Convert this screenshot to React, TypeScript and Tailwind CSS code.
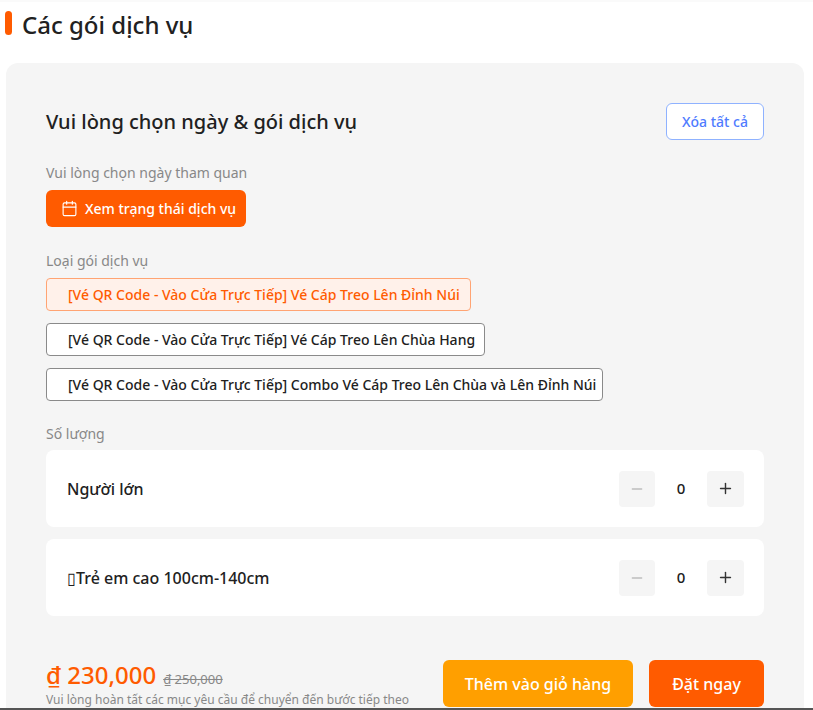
import { Calendar, Minus, Plus } from "lucide-react";

const font = { fontFamily: '"Noto Sans", "Open Sans", sans-serif' };

function Counter({ label }: { label: string }) {
  return (
    <div className="flex h-[77px] items-center justify-between rounded-lg bg-white pl-[21px] pr-5">
      <span className="text-[16px] font-medium text-[#212121]">{label}</span>
      <div className="flex items-center">
        <button className="flex h-9 w-9 items-center justify-center rounded bg-[#f5f5f5] text-[#bdbdbd]">
          <Minus size={16} />
        </button>
        <span className="w-[52px] text-center text-[15px] font-medium text-[#212121]">0</span>
        <button className="flex h-9 w-[37px] items-center justify-center rounded bg-[#f5f5f5] text-[#333]">
          <Plus size={17} />
        </button>
      </div>
    </div>
  );
}

export default function App() {
  const base = "flex h-[33px] items-center rounded border pl-[21px] text-[14px] font-medium";
  return (
    <div style={font} className="relative h-[710px] w-[813px] overflow-hidden bg-white">
      <div className="h-[2px] bg-[#fafafa]" />
      <div className="flex h-[61px] items-start pl-[5px] pt-[9px]">
        <div className="h-6 w-[7px] rounded bg-[#ff5b00]" />
        <h1 className="ml-[10px] text-[24px] leading-[30px] font-medium text-[#212121] -mt-[1px]">Các gói dịch vụ</h1>
      </div>
      <div className="ml-[6px] h-[660px] w-[798px] rounded-xl bg-[#f5f5f5] px-10 pt-10">
        <div className="flex h-[37px] items-center justify-between">
          <h2 className="text-[20px] font-medium text-[#212121]">Vui lòng chọn ngày &amp; gói dịch vụ</h2>
          <button className="h-[37px] w-[98px] rounded-md border border-[#8fb2ff] bg-white text-[14px] font-medium text-[#4f7cff]">
            Xóa tất cả
          </button>
        </div>
        <p className="mt-[23px] text-[14px] leading-5 text-[#888]">Vui lòng chọn ngày tham quan</p>
        <button className="mt-[7px] flex h-[37px] w-[200px] items-center gap-[7px] rounded-md bg-[#ff5b00] pl-[15px] text-[14px] font-medium text-white">
          <Calendar size={17} strokeWidth={1.6} />
          Xem trạng thái dịch vụ
        </button>
        <p className="mt-6 text-[14px] leading-5 text-[#888]">Loại gói dịch vụ</p>
        <div className="mt-[7px] flex flex-col items-start gap-[12px]">
          <div className={`${base} w-[425px] border-[#ffa473] bg-[#fff1ea] text-[#ff5b00]`}>
            [Vé QR Code - Vào Cửa Trực Tiếp] Vé Cáp Treo Lên Đỉnh Núi
          </div>
          <div className={`${base} w-[439px] border-[#8a8a8a] bg-white text-[#212121]`}>
            [Vé QR Code - Vào Cửa Trực Tiếp] Vé Cáp Treo Lên Chùa Hang
          </div>
          <div className={`${base} w-[557px] border-[#8a8a8a] bg-white text-[#212121]`}>
            [Vé QR Code - Vào Cửa Trực Tiếp] Combo Vé Cáp Treo Lên Chùa và Lên Đỉnh Núi
          </div>
        </div>
        <p className="mt-[23px] text-[14px] leading-5 text-[#888]">Số lượng</p>
        <div className="mt-[6px] flex flex-col gap-3">
          <Counter label="Người lớn" />
          <Counter label="▯Trẻ em cao 100cm-140cm" />
        </div>
        <div className="mt-[44px] flex items-start justify-between">
          <div>
            <div className="flex items-baseline">
              <span className="text-[24px] leading-[30px] font-medium text-[#ff5b00]">₫ 230,000</span>
              <span className="ml-[7px] text-[13px] text-[#888] line-through">₫ 250,000</span>
            </div>
            <p className="mt-[1px] text-[12px] leading-[17px] text-[#888]">
              Vui lòng hoàn tất các mục yêu cầu để chuyển đến bước tiếp theo
            </p>
          </div>
          <div className="flex gap-4">
            <button className="h-[47px] w-[190px] rounded-md bg-[#ff9f00] text-[16px] font-medium text-white">
              Thêm vào giỏ hàng
            </button>
            <button className="h-[47px] w-[115px] rounded-md bg-[#ff5b00] text-[16px] font-medium text-white">
              Đặt ngay
            </button>
          </div>
        </div>
      </div>
      <div className="absolute bottom-0 left-0 h-[2px] w-full bg-[#555]" />
    </div>
  );
}
